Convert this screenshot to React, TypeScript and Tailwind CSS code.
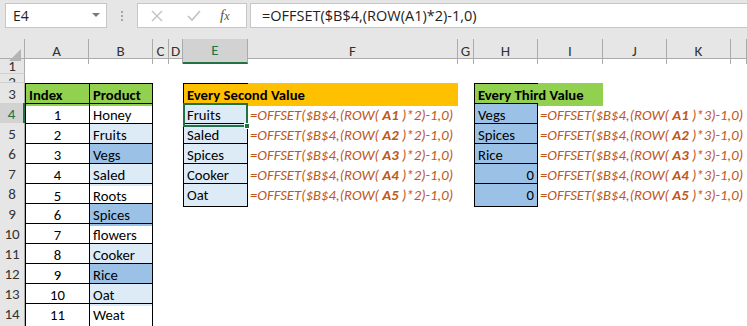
import React from "react";

const GRID =
  "grid grid-cols-[25px_64px_64px_16px_14px_65px_210px_16px_64px_65px_64px_64px_1fr]";
const FONT = { fontFamily: "Carlito, 'Liberation Sans', Arial, sans-serif" };

const LIGHT = "bg-[#ddebf7]";
const MED = "bg-[#9bc2e6]";

function Formula({ n, m }: { n: number; m: number }) {
  return (
    <span className="italic text-[#c0581a] text-[14.7px] whitespace-nowrap">
      {"=OFFSET($B$4,(ROW( "}
      <b>{`A${n}`}</b>
      {` )*${m})-1,0)`}
    </span>
  );
}

type Cell = { content?: React.ReactNode; cls?: string };

const products: [string, string][] = [
  ["Honey", ""],
  ["Fruits", LIGHT],
  ["Vegs", MED],
  ["Saled", LIGHT],
  ["Roots", ""],
  ["Spices", MED],
  ["flowers", ""],
  ["Cooker", LIGHT],
  ["Rice", MED],
  ["Oat", LIGHT],
  ["Weat", ""],
];
const second = ["Fruits", "Saled", "Spices", "Cooker", "Oat"];
const third = ["Vegs", "Spices", "Rice", "0", "0"];

function buildRow(r: number): Cell[] {
  const cells: Cell[] = Array.from({ length: 12 }, () => ({}));
  if (r === 3) {
    cells[0] = { content: "Index", cls: "bg-[#92d050] font-bold border-l border-t border-black pl-[3px]" };
    cells[1] = { content: "Product", cls: "bg-[#92d050] font-bold border-l border-t border-r border-black pl-[3px]" };
    cells[4] = {
      content: <span className="relative z-10 whitespace-nowrap">Every Second Value</span>,
      cls: "bg-[#ffc000] font-bold border-l border-t border-black pl-[3px]",
    };
    cells[5] = { cls: "bg-[#ffc000]" };
    cells[7] = {
      content: <span className="relative z-10 whitespace-nowrap">Every Third Value</span>,
      cls: "bg-[#92d050] font-bold border-l border-t border-black pl-[3px]",
    };
    cells[8] = { cls: "bg-[#92d050]" };
  } else if (r >= 4 && r <= 14) {
    const i = r - 4;
    const last = r === 14 ? " border-b" : "";
    cells[0] = { content: String(i + 1), cls: "justify-center border-l border-t border-black" + last };
    cells[1] = {
      content: products[i][0],
      cls: `${products[i][1]} pl-[3px] border-l border-t border-r border-black` + last,
    };
    if (r <= 8) {
      const j = r - 4;
      const lb = r === 8 ? " border-b" : "";
      cells[4] = {
        content: (
          <>
            {second[j]}
            {r === 4 && (
              <div className="absolute -left-[1px] -top-[1px] -right-[1px] -bottom-[1px] border-2 border-[#217346] z-20">
                <div className="absolute -right-[4px] -bottom-[4px] w-[6px] h-[6px] bg-[#217346] border border-white" />
              </div>
            )}
          </>
        ),
        cls: `${LIGHT} pl-[3px] border-l border-t border-r border-black relative` + lb,
      };
      cells[5] = { content: <Formula n={j + 1} m={2} />, cls: "pl-[2px]" };
      const isNum = third[j] === "0";
      cells[7] = {
        content: third[j],
        cls: `${MED} border-l border-t border-r border-black ${isNum ? "justify-end pr-[3px]" : "pl-[3px]"}` + lb,
      };
      cells[8] = { content: <Formula n={j + 1} m={3} />, cls: "pl-[2px]" };
    }
  }
  return cells;
}

function RowHeader({ label, active, tiny }: { label: string; active?: boolean; tiny?: boolean }) {
  return (
    <div
      className={
        "flex justify-center text-[15px] leading-none overflow-hidden border-b border-[#d0d0d0] " +
        (tiny ? "items-start pt-[1px] " : "items-center ") +
        (active
          ? "bg-[#d2d2d2] text-[#217346] border-r-2 border-r-[#217346]"
          : "bg-[#e6e6e6] text-[#333] border-r border-r-[#ababab]")
      }
    >
      {label}
    </div>
  );
}

export default function App() {
  const colLetters = ["A", "B", "C", "D", "E", "F", "G", "H", "I", "J", "K", ""];
  const heights: Record<number, string> = { 1: "h-[15px]", 2: "h-[9px]" };
  const rows = Array.from({ length: 15 }, (_, i) => i + 1);

  return (
    <div className="w-[747px] h-[326px] overflow-hidden bg-white text-[#000]" style={FONT}>
      {/* toolbar */}
      <div className="h-[39px] bg-[#e6e6e6] flex items-start pt-[3px]">
        <div className="ml-[5px] w-[102px] h-[25px] bg-white border border-[#c6c6c6] flex items-center pl-[7px] pr-[6px] justify-between">
          <span className="text-[14px] text-[#222]" style={{ fontFamily: "'Open Sans', 'Liberation Sans', sans-serif" }}>E4</span>
          <svg width="8" height="5" viewBox="0 0 8 5">
            <path d="M0 0 L8 0 L4 4 Z" fill="#7a7a7a" />
          </svg>
        </div>
        <div className="w-[30px] h-[25px] flex flex-col items-center justify-center gap-[2px]">
          <div className="w-[2px] h-[2px] bg-[#a6a6a6]" />
          <div className="w-[2px] h-[2px] bg-[#a6a6a6]" />
          <div className="w-[2px] h-[2px] bg-[#a6a6a6]" />
        </div>
        <div className="w-[110px] h-[25px] bg-white border border-[#c6c6c6] flex items-center">
          <svg className="ml-[13px]" width="12" height="12" viewBox="0 0 12 12">
            <path d="M1 1 L11 11 M11 1 L1 11" stroke="#c2c2c2" strokeWidth="1.4" />
          </svg>
          <svg className="ml-[24px]" width="14" height="12" viewBox="0 0 14 12">
            <path d="M1 6 L5 10 L13 1" stroke="#c2c2c2" strokeWidth="1.6" fill="none" />
          </svg>
          <span
            className="ml-[19px] italic text-[15px] text-[#555]"
            style={{ fontFamily: "'Liberation Serif', 'DejaVu Serif', serif" }}
          >
            f<span className="text-[12px]">x</span>
          </span>
        </div>
        <div className="ml-[3px] flex-1 h-[25px] bg-white border-y border-l border-[#c6c6c6] flex items-center pl-[11px]">
          <span className="text-[14.5px] text-[#222]" style={{ fontFamily: "'Open Sans', 'Liberation Sans', sans-serif" }}>
            =OFFSET($B$4,(ROW(A1)*2)-1,0)
          </span>
        </div>
      </div>

      {/* column header */}
      <div className={GRID + " h-[20px] bg-[#e6e6e6] border-b border-[#ababab]"}>
        <div className="relative border-r border-[#ababab]">
          <svg className="absolute right-[3px] bottom-[3px]" width="12" height="12" viewBox="0 0 12 12">
            <path d="M12 0 L12 12 L0 12 Z" fill="#b4b4b4" />
          </svg>
        </div>
        {colLetters.map((c, i) => (
          <div
            key={i}
            className={
              "flex items-center justify-center text-[15px] border-r border-[#ababab] " +
              (c === "E" ? "bg-[#d2d2d2] text-[#217346] border-b-2 border-b-[#217346]" : "text-[#333]")
            }
          >
            {c}
          </div>
        ))}
      </div>

      {rows.map((r) => {
        const cells = buildRow(r);
        return (
          <div key={r} className={GRID + " " + (heights[r] ?? "h-[20px]")}>
            <RowHeader label={String(r)} active={r === 4} tiny={r === 2} />
            {cells.map((c, i) => (
              <div key={i} className={"flex items-center text-[14.7px] overflow-visible " + (c.cls ?? "")}>
                {c.content}
              </div>
            ))}
          </div>
        );
      })}
    </div>
  );
}
